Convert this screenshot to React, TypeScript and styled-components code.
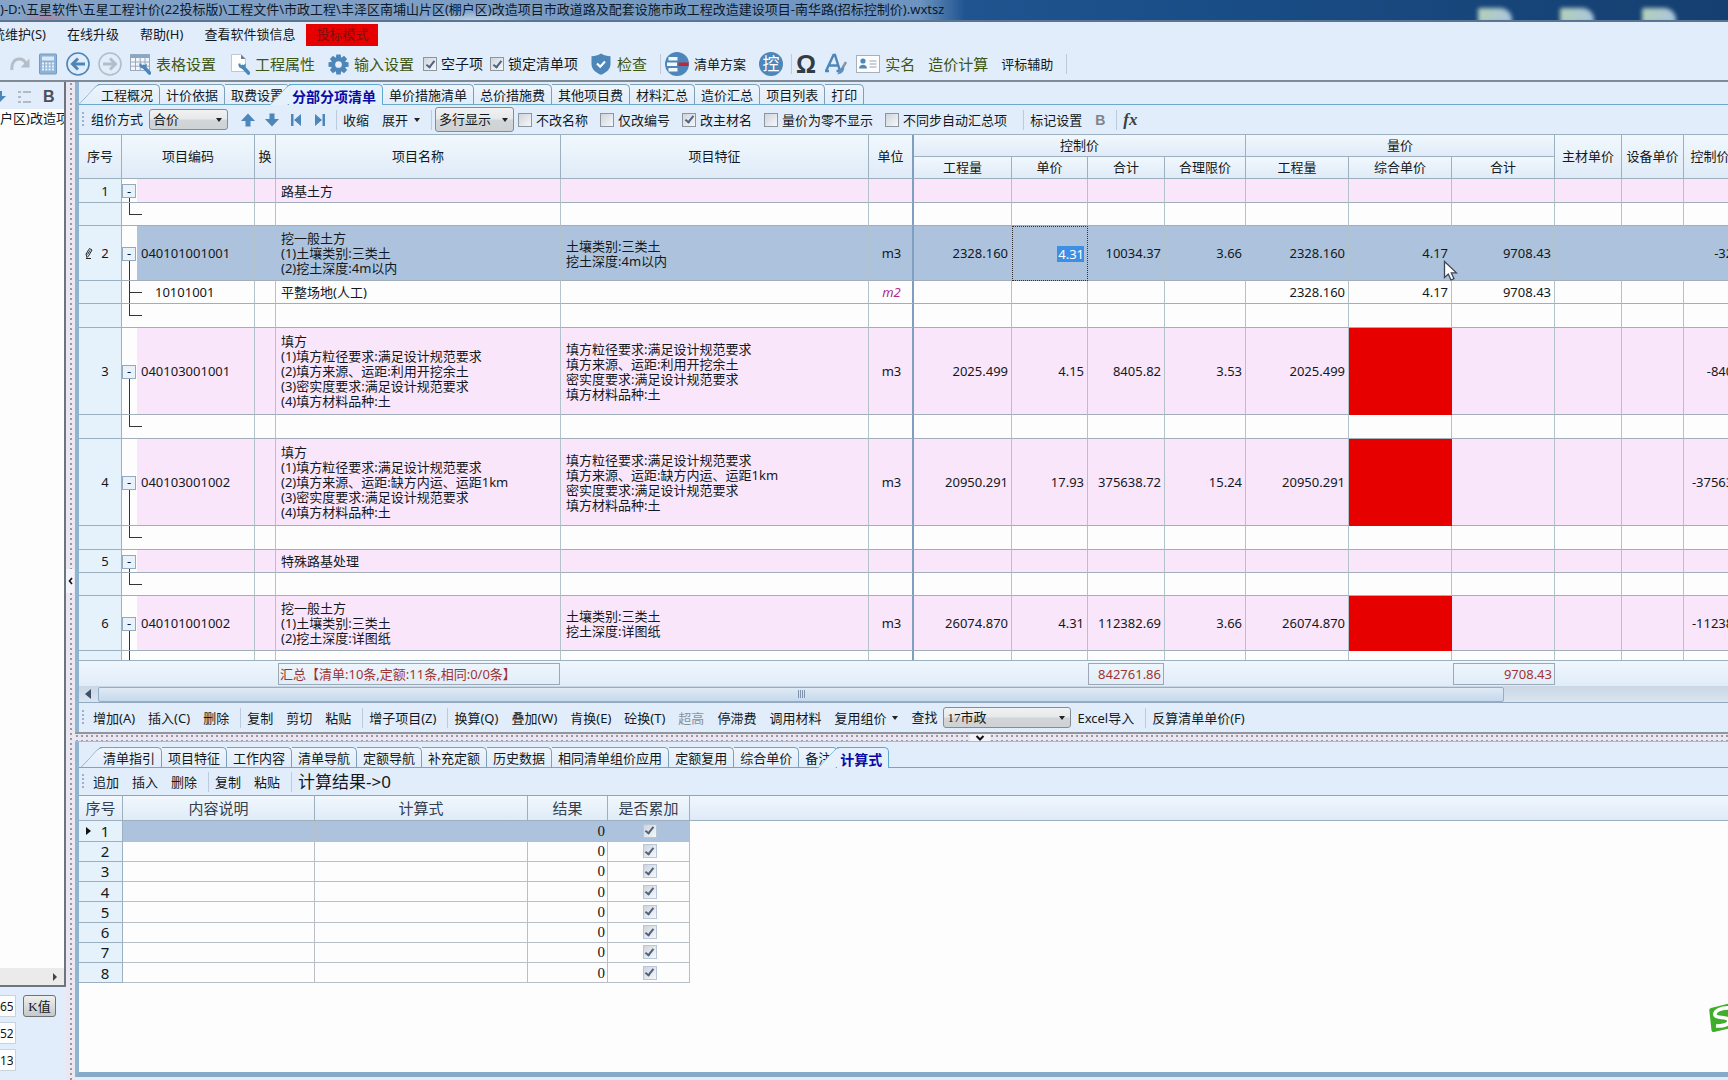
import React from "react";
import styled, { createGlobalStyle, css } from "styled-components";

const line = "#9db0bf";
const paneBg = "#e1edfb";
const blue = "#4d86b8";

const GlobalStyle = createGlobalStyle`
  *, *::before, *::after { box-sizing: border-box; }
  html, body { margin: 0; padding: 0; overflow: hidden; background: ${paneBg}; }
  body, button, input, select {
    font-family: "Noto Sans", "Noto Sans CJK SC", sans-serif;
    font-size: 13px;
    line-height: 15px;
    color: #121820;
  }
  button { border: 0; background: none; padding: 0; margin: 0; }
`;

/* ---------- window frame ---------- */

const Window = styled.div`
  display: flex;
  flex-direction: column;
  height: 100vh;
  overflow: hidden;
  background: ${paneBg};
`;

const TitleBar = styled.header`
  position: relative;
  flex: none;
  height: 22px;
  overflow: hidden;
  border-bottom: 2px solid #5a7594;
  background:
    radial-gradient(ellipse 26px 10px at 46px 20px, rgba(190, 120, 140, 0.7), transparent),
    radial-gradient(ellipse 60px 10px at 475px 20px, rgba(220, 235, 240, 0.7), transparent),
    linear-gradient(90deg, #86a3c7 0, #7c9dc4 500px, #6d94c0 920px, #1f5490 965px, #1a4f89 1150px, #153f70 100%);
`;

const TitleText = styled.h1`
  margin: 0;
  font-size: 13px;
  font-weight: 400;
  line-height: 19px;
  white-space: nowrap;
  color: #0c1a2c;
`;

const GlassIcons = styled.div`
  position: absolute;
  right: 52px;
  bottom: -3px;
  display: flex;
  gap: 48px;
  filter: blur(2px);
`;

const GlassIcon = styled.span`
  width: 34px;
  height: 15px;
  border-radius: 2px 12px 0 0;
  background: linear-gradient(100deg, #b4d0b8, #a9c5de);
`;

const MenuBar = styled.nav`
  flex: none;
  display: flex;
  align-items: center;
  gap: 1px;
  height: 26px;
  margin-left: -31px;
`;

const MenuItem = styled.button<{ $alert?: boolean }>`
  height: 22px;
  padding: 0 10px 2px;
  white-space: nowrap;
  ${(p) => p.$alert && css`background: #e60000; color: #7a1010;`}
`;

const Toolbar = styled.div<{ $h: number; $inset?: number }>`
  flex: none;
  display: flex;
  align-items: center;
  height: ${(p) => p.$h}px;
  padding-left: ${(p) => p.$inset ?? 3}px;
  white-space: nowrap;
  overflow: hidden;
`;

const MainToolbar = styled(Toolbar)`
  border-bottom: 2px solid #808a94;
`;

const ToolButton = styled.button<{ $tone?: "olive"; $size?: number; $icon?: boolean }>`
  flex: none;
  display: flex;
  align-items: center;
  gap: 5px;
  padding: ${(p) => (p.$icon ? "0 4px" : "0 9px 0 4px")};
  font-size: ${(p) => p.$size ?? 13}px;
  line-height: 22px;
  color: ${(p) => (p.$tone === "olive" ? "#3f5610" : "#121820")};
  svg { display: block; }
`;

const TextButton = styled.button<{ $dim?: boolean }>`
  flex: none;
  display: flex;
  align-items: center;
  gap: 6px;
  margin-right: 1px;
  padding: 0 6px;
  line-height: 20px;
  color: ${(p) => (p.$dim ? "#8b919b" : "#121820")};
`;

const Sep = styled.span`
  flex: none;
  width: 1px;
  height: 20px;
  margin-left: 4px;
  background: #bccadb;
`;

const Grip = styled.span<{ $wide?: boolean }>`
  flex: none;
  width: 3px;
  height: 15px;
  margin-right: ${(p) => (p.$wide ? 2 : 0)}px;
  background: radial-gradient(circle at 1px 1px, #9fb0c6 1px, transparent 1px) 0 0 / 3px 4px;
`;

const Caret = styled.span`
  border: 3px solid transparent;
  border-top: 4px solid #222;
  border-bottom: 0;
`;

const Check = styled.label<{ $size?: number; $gap?: number }>`
  flex: none;
  display: flex;
  align-items: center;
  gap: 4px;
  padding-right: ${(p) => p.$gap ?? 12}px;
  font-size: ${(p) => p.$size ?? 13}px;
  line-height: 20px;
`;

const Box = styled.input.attrs({ type: "checkbox" })<{ $plain?: boolean }>`
  appearance: none;
  flex: none;
  display: inline-grid;
  place-content: center;
  width: 14px;
  height: 14px;
  margin: 0;
  border: 1px solid ${(p) => (p.$plain ? "#b9c6d8" : "#8d969f")};
  background: linear-gradient(135deg, #cfd5dc, #f6f8fa);
  vertical-align: middle;
  &:checked::after {
    content: "";
    width: 5px;
    height: 9px;
    margin-bottom: 2px;
    border: solid #4f6280;
    border-width: 0 2px 2px 0;
    transform: rotate(38deg);
  }
`;

const SelectWrap = styled.span<{ $w: number; $h: number }>`
  flex: none;
  display: inline-grid;
  align-items: center;
  width: ${(p) => p.$w}px;
  height: ${(p) => p.$h}px;
  border: 1px solid #868c93;
  border-radius: 3px;
  background: linear-gradient(#f1f2f3, #e6e8ea 48%, #d3d6d9 52%, #cfd2d5);
  > * { grid-area: 1 / 1; }
  > ${Caret} { justify-self: end; margin-right: 5px; pointer-events: none; }
`;

const Select = styled.select<{ $serif?: boolean }>`
  appearance: none;
  width: 100%;
  height: 100%;
  padding: 0 3px;
  border: 0;
  background: none;
  ${(p) => p.$serif && css`font-family: "Liberation Serif", "Noto Sans CJK SC", serif;`}
`;

const FieldLabel = styled.label<{ $tail?: number }>`
  display: flex;
  align-items: center;
  gap: 6px;
  padding: 0 ${(p) => p.$tail ?? 0}px 0 6px;
`;

const BareField = styled.span`
  display: flex;
  padding: 0 4px 0 3px;
`;

const Glyph = styled.span<{ $color: string; $serif?: boolean; $size: number; $italic?: boolean }>`
  font-family: ${(p) => (p.$serif ? '"Liberation Serif", serif' : '"Liberation Sans", sans-serif')};
  font-size: ${(p) => p.$size}px;
  font-weight: 700;
  font-style: ${(p) => (p.$italic ? "italic" : "normal")};
  line-height: 22px;
  color: ${(p) => p.$color};
`;

const Badge = styled.span`
  display: grid;
  place-content: center;
  width: 24px;
  height: 24px;
  border-radius: 50%;
  background: ${blue};
  color: #fff;
  font-size: 17px;
`;

/* ---------- body ---------- */

const Body = styled.div`
  flex: 1;
  min-height: 0;
  display: flex;
`;

const Side = styled.aside`
  flex: none;
  display: flex;
  flex-direction: column;
  width: 66px;
  overflow: hidden;
  white-space: nowrap;
`;

const SideTop = styled.div`
  flex: 1;
  display: flex;
  flex-direction: column;
  border-right: 2px solid #6c7680;
  border-bottom: 2px solid #6c7680;
  background: #fdfdfd;
`;

const SideTools = styled.div`
  display: flex;
  align-items: center;
  gap: 12px;
  height: 27px;
  padding-top: 2px;
  background: ${paneBg};
`;

const TreeNode = styled.div`
  flex: 1;
  padding-top: 1px;
  overflow: hidden;
  line-height: 17px;
`;

const SideScroll = styled.div`
  display: flex;
  align-items: center;
  justify-content: flex-end;
  height: 17px;
  padding-right: 7px;
  background: #ecebec;
`;

const SideBottom = styled.div`
  display: flex;
  flex-direction: column;
  gap: 5px;
  padding: 8px 0 9px;
`;

const SideRow = styled.div`
  display: flex;
  align-items: center;
  gap: 7px;
  height: 22px;
`;

const SideInput = styled.input`
  width: 16px;
  height: 22px;
  padding: 0 2px 0 0;
  border: 1px solid #c9d3de;
  border-left: 0;
  background: #fdfdfd;
  font-size: 12px;
  text-align: right;
`;

const KButton = styled.button`
  width: 33px;
  height: 22px;
  border: 1px solid #6d7276;
  border-radius: 3px;
  background: linear-gradient(#f0f0f0, #dcdcdc 48%, #c8c8c8);
  font-family: "Liberation Serif", "Noto Sans CJK SC", serif;
`;

const dotsBg = css`
  background-color: #ebe7f0;
  background-image: radial-gradient(circle at 2px 2px, #9a97aa 1px, transparent 1px);
  background-size: 5px 5px;
`;

const VSplit = styled.div`
  flex: none;
  display: flex;
  align-items: center;
  width: 9px;
  ${dotsBg}
  background-repeat: repeat-y;
  background-position: 3px 0;
`;

const VHandle = styled.button`
  display: grid;
  place-content: center;
  width: 8px;
  height: 24px;
  background: #f3f4fa;
`;

const Main = styled.main`
  flex: 1;
  min-width: 0;
  display: flex;
  flex-direction: column;
  padding-bottom: 3px;
`;

const Panel = styled.section<{ $grow: number; $end?: boolean }>`
  flex: ${(p) => p.$grow} 1 0;
  min-height: 0;
  display: flex;
  flex-direction: column;
  border-left: 4px solid #8fb4d2;
  ${(p) => p.$end && css`border-bottom: 5px solid #86abc8;`}
`;

/* ---------- tabs ---------- */

const TabRow = styled.div<{ $top: number; $inset?: number }>`
  flex: none;
  display: flex;
  align-items: flex-end;
  height: ${(p) => 20 + p.$top}px;
  padding-left: ${(p) => p.$inset ?? 0}px;
  border-bottom: 1px solid #6fa9c8;
  white-space: nowrap;
`;

const Tab = styled.button<{ $slant?: boolean; $on?: boolean; $tucked?: boolean }>`
  position: relative;
  flex: none;
  height: 20px;
  padding: 2px 6px 0;
  border: 1px solid #7d9fb8;
  border-left: 0;
  border-bottom: 0;
  border-radius: 0 5px 0 0;
  line-height: 17px;
  background: linear-gradient(#eef5fc, ${paneBg});
  ${(p) => p.$slant && css`
    margin-left: 19px;
    padding-left: 3px;
    z-index: 0;
    &::before {
      content: "";
      position: absolute;
      top: -1px;
      left: -10px;
      width: 18px;
      height: 20px;
      border: 1px solid #7d9fb8;
      border-width: 1px 0 0 1px;
      border-radius: 4px 0 0 0;
      background: inherit;
      transform: skewX(-43deg);
      z-index: -1;
    }
  `}
  ${(p) => p.$on && css`
    margin-left: 9px;
    margin-bottom: -1px;
    z-index: 1;
    height: 21px;
    font-weight: 700;
    font-size: 14px;
    color: #0a0aa8;
    background: #e4f1fd;
    border-color: #5fa8d0;
    &::before { height: 21px; border-color: #5fa8d0; }
  `}
  ${(p) => p.$tucked && css`margin-right: -10px;`}
`;

/* ---------- main grid ---------- */

const GridScroll = styled.div`
  flex: 1;
  min-height: 0;
  overflow: hidden;
  border-top: 1px solid ${line};
  background: #fdfdfd;
`;

const Grid = styled.table`
  table-layout: fixed;
  width: 1684px;
  border-collapse: separate;
  border-spacing: 0;
`;

const Th = styled.th<{ $thick?: boolean }>`
  height: 22px;
  padding: 0;
  border-right: ${(p) => (p.$thick ? "2px solid #7f9fc0" : `1px solid ${line}`)};
  border-bottom: 1px solid ${line};
  background: linear-gradient(#f1f8fd, #e0ebf8);
  font-weight: 400;
  text-align: center;
  white-space: nowrap;
`;

type Tone = "pink" | "pick" | "plain";
const tones: Record<Tone, string> = { pink: "#fae6fb", pick: "#adc3dd", plain: "#fdfdfd" };

const Tr = styled.tr<{ $h: number; $tone: Tone }>`
  height: ${(p) => p.$h}px;
  background: ${(p) => tones[p.$tone]};
`;

const Td = styled.td<{ $num?: boolean; $mid?: boolean; $thick?: boolean; $red?: boolean; $focus?: boolean }>`
  padding: 1px 3px 0 5px;
  border-right: ${(p) => (p.$thick ? "2px solid #7f9fc0" : "1px solid #b3c3cc")};
  border-bottom: 1px solid #a3aebb;
  white-space: pre-line;
  text-align: ${(p) => (p.$num ? "right" : p.$mid ? "center" : "left")};
  ${(p) => p.$red && css`background: #e60000; border-color: #e60000;`}
  ${(p) => p.$focus && css`outline: 1px dotted #333; outline-offset: -1px;`}
`;

const RowHead = styled.td`
  padding: 1px 0 0;
  border-right: 1px solid ${line};
  border-bottom: 1px solid ${line};
  background: #e6f2fb;
`;

const HeadInner = styled.span`
  display: grid;
  grid-template-columns: 18px 16px 1fr;
  align-items: center;
  justify-items: center;
`;

type Branch = "open" | "mid" | "end" | "none";
const ink = "linear-gradient(#333, #333)";
const branchBg: Record<Branch, string> = {
  open: `${ink} 7px 100% / 1px 50% no-repeat`,
  mid: `${ink} 7px 0 / 1px 100% no-repeat, ${ink} 7px 50% / 8px 1px no-repeat`,
  end: `${ink} 7px 0 / 1px 50% no-repeat, ${ink} 7px 50% / 8px 1px no-repeat`,
  none: `${ink} 7px 0 / 1px 100% no-repeat`,
};

const Gutter = styled.td<{ $branch: Branch }>`
  padding: 1px 0 0;
  border-bottom: 1px solid #a3aebb;
  background: ${(p) => branchBg[p.$branch]}, #fdfdfd;
`;

const CodeTd = styled(Td)<{ $tick?: boolean; $child?: boolean }>`
  padding-left: ${(p) => (p.$child ? 18 : 4)}px;
  ${(p) => p.$tick && css`background: ${ink} 0 50% / 5px 1px no-repeat;`}
`;

const Fold = styled.button`
  display: block;
  width: 14px;
  height: 14px;
  border: 1px solid #93a9bd;
  background: #e9f2fa;
  line-height: 11px;
`;

const Unit = styled.span`
  font-style: italic;
  color: #b3288f;
`;

const CellInput = styled.input`
  width: 27px;
  height: 16px;
  padding: 0;
  border: 0;
  background: #3d8fe6;
  color: #fff;
  text-align: right;
`;

const Summary = styled.div`
  flex: none;
  display: grid;
  grid-template-columns: 199px 282px 528px 76px 289px 102px;
  align-items: center;
  height: 26px;
  border-top: 1px solid ${line};
  background: linear-gradient(#eff7fd, #e0ecf8);
`;

const Total = styled.output<{ $col: number; $num?: boolean }>`
  grid-column: ${(p) => p.$col};
  height: 22px;
  padding: 0 2px 0 1px;
  border: 1px solid #9aa9b5;
  line-height: 20px;
  white-space: nowrap;
  color: #a03434;
  text-align: ${(p) => (p.$num ? "right" : "left")};
`;

const HScroll = styled.div`
  flex: none;
  display: flex;
  align-items: center;
  height: 17px;
  padding-left: 6px;
  gap: 6px;
  border-bottom: 1px solid #93a9c0;
  background: linear-gradient(#c9d6e5, #dbe5f0);
`;

const Thumb = styled.div`
  display: grid;
  place-content: center;
  width: 85.6%;
  height: 15px;
  border: 1px solid #94adc8;
  border-radius: 2px;
  background: linear-gradient(#dfeaf5, #c6d9ec);
`;

const ThumbGrip = styled.span`
  width: 7px;
  height: 8px;
  background: repeating-linear-gradient(90deg, #7f95ad 0 1px, transparent 1px 2px);
`;

const HSplit = styled.div`
  flex: none;
  display: flex;
  justify-content: center;
  height: 10px;
  padding-left: 156px;
  border-top: 2px solid #8f96a0;
  border-bottom: 1px solid #b8b8c4;
  ${dotsBg}
`;

const HHandle = styled.button`
  display: grid;
  place-content: center;
  width: 20px;
  height: 7px;
  background: #f3f4fa;
`;

/* ---------- formula grid ---------- */

const ResultText = styled.span`
  padding-left: 6px;
  font-size: 17px;
  line-height: 22px;
`;

const FormulaArea = styled.div`
  flex: 1;
  min-height: 0;
  overflow: hidden;
  border-top: 1px solid #8fa5b8;
  background: linear-gradient(#eff7fd, #e0ebf8 24px, ${line} 24px, ${line} 25px, #fdfdfd 25px);
`;

const FormulaTable = styled.table`
  table-layout: fixed;
  width: 611px;
  height: 187px;
  border-collapse: separate;
  border-spacing: 0;
  font-size: 15px;
  line-height: 17px;
`;

const FTh = styled(Th)`
  height: 25px;
  font-size: 15px;
  color: #34404f;
`;

const FTr = styled.tr<{ $on?: boolean }>`
  background: ${(p) => (p.$on ? tones.pick : "#fdfdfd")};
`;

const FTd = styled.td<{ $num?: boolean }>`
  padding: 0 2px 0 4px;
  border-right: 1px solid #b9bfc6;
  border-bottom: 1px solid #b9bfc6;
  text-align: ${(p) => (p.$num ? "right" : "center")};
  font-family: ${(p) => (p.$num ? '"Liberation Serif", serif' : "inherit")};
  line-height: 0;
`;

const Pointer = styled.svg`
  position: fixed;
  left: 1443px;
  top: 260px;
`;

const Sogou = styled.svg`
  position: fixed;
  right: 0;
  bottom: 45px;
`;

/* ---------- icons ---------- */

const RedoIcon = () => (
  <svg width="20" height="20" viewBox="0 0 20 20" fill="none" stroke="#b4bdc8" strokeWidth="3">
    <path d="M2 16C1 9 5 4.500 10 5c3 .3 5 2 6 5" />
    <path d="M19.500 4.500v9h-9z" fill="#b4bdc8" stroke="none" />
  </svg>
);
const CalcIcon = () => (
  <svg width="20" height="22" viewBox="0 0 20 22">
    <rect x="1.500" y="1" width="17" height="20" rx="1" fill="#8fb3d6" stroke="#6f9bc6" />
    <rect x="4" y="3.500" width="12" height="4" fill="#dce9f6" />
    {[9.5, 12.5, 15.5].map((y) =>
      [4, 7.3, 10.6, 13.9].map((x) => <rect key={`${x}-${y}`} x={x} y={y} width="2" height="2" fill="#eef5fc" />)
    )}
  </svg>
);
const CircleArrow = ({ color, flip }: { color: string; flip?: boolean }) => (
  <svg width="24" height="24" viewBox="0 0 24 24" fill="none" stroke={color}>
    <circle cx="12" cy="12" r="11" strokeWidth="1.600" />
    <g transform={flip ? "translate(24 0) scale(-1 1)" : undefined} strokeWidth="3">
      <path d="M19 12H7" />
      <path d="M12 6.500 6.500 12l5.500 5.500" />
    </g>
  </svg>
);
const Wrench = () => (
  <g>
    <path d="m13.500 13.500 6 6.500" stroke={blue} strokeWidth="3.600" strokeLinecap="round" />
    <path d="M9.500 10.500c-.6 2.800 1.400 5.300 4 5 2.600-.3 3.800-2.700 3-5l-2.400 2.300-2.300-.6-.3-1.700z" fill={blue} />
  </g>
);
const TableIcon = () => (
  <svg width="21" height="22" viewBox="0 0 21 22" fill="none">
    <rect x=".5" y="1.500" width="19" height="16" fill="#f2f6fa" stroke="#9aa9bd" />
    <rect x=".5" y="1.500" width="19" height="3.500" fill="#8ba7c6" />
    <path d="M.5 9h19M.5 13.200h19M5.500 5v12.500M10.200 5v12.500M15 5v12.500" stroke="#9aa9bd" />
    <Wrench />
  </svg>
);
const DocIcon = () => (
  <svg width="21" height="22" viewBox="0 0 21 22" fill="none">
    <path d="M2.500 1.500h9.500l4.500 4.500v12.500h-14z" fill="#fff" stroke="#bcc8d6" />
    <path d="M12 1.500v4.500h4.500z" fill="#6f7c8c" />
    <Wrench />
  </svg>
);
const GearIcon = () => (
  <svg width="21" height="21" viewBox="0 0 22 22">
    <g fill={blue}>
      {[0, 45, 90, 135, 180, 225, 270, 315].map((a) => (
        <path key={a} d="M8.700 0.500h4.600l.6 5h-5.800z" transform={`rotate(${a} 11 11)`} />
      ))}
      <circle cx="11" cy="11" r="7.800" />
    </g>
    <circle cx="11" cy="11" r="3.500" fill="#e8f1fb" />
  </svg>
);
const ShieldIcon = () => (
  <svg width="22" height="22" viewBox="0 0 22 22">
    <path d="M11 0.500c3 2 6 2.700 9.500 2.700V11c0 5-4 8.500-9.500 10.800C5.500 19.500 1.500 16 1.500 11V3.200C5 3.200 8 2.500 11 .5z" fill={blue} />
    <path d="m7 10.500 3.200 3.200L15 8.500" fill="none" stroke="#fff" strokeWidth="2.200" />
  </svg>
);
const PlanIcon = () => (
  <svg width="24" height="24" viewBox="0 0 24 24">
    <circle cx="12" cy="12" r="12" fill={blue} />
    <path d="M3.500 5h9v3.500h-9zM2 10.500h10v3.500H2zM3.500 16h9v3.500h-9z" fill="#f4f8fc" />
    <rect x="13.500" y="10.500" width="10" height="3.500" fill="#c3243a" />
  </svg>
);
const FontIcon = () => (
  <svg width="24" height="24" viewBox="0 0 24 24" fill="none">
    <path d="M2 19 9.500 3h1.500l5 16M5 13.500h9M1 19h4M12.500 19h4" stroke={blue} strokeWidth="2.400" />
    <path d="m22 10-3.500 6" stroke="#8b97a6" strokeWidth="2.500" />
    <path d="M19.500 14.500c2 2.500-.5 7.500-6.500 8 2.500-2 1.500-6.500 6.500-8z" fill="#5f8fbd" />
  </svg>
);
const CardIcon = () => (
  <svg width="24" height="18" viewBox="0 0 24 18">
    <rect x=".5" y=".5" width="23" height="17" fill="#fbfcfe" stroke="#a8b0bb" />
    <circle cx="7" cy="6" r="2.600" fill={blue} />
    <path d="M3 13.500c0-5 8-5 8 0z" fill={blue} />
    <path d="M13.500 6h7M13.500 9h7M13.500 12h7" stroke="#9aa3ae" />
  </svg>
);
const NavArrow = ({ kind }: { kind: "up" | "down" | "first" | "last" }) => {
  const d = {
    up: "M8 1.500 15 9h-4.500v5.500h-5V9H1z",
    down: "M8 14.500 1 7h4.500V1.500h5V7H15z",
    first: "M3 2h2.500v12H3zM13 2v12L6 8z",
    last: "M10.500 2H13v12h-2.500zM3 2v12l7-6z",
  }[kind];
  return (
    <svg width="16" height="16" viewBox="0 0 16 16">
      <path d={d} fill={blue} />
    </svg>
  );
};
const EditMark = () => (
  <svg width="9" height="13" viewBox="0 0 9 13" fill="none" stroke="#222">
    <path d="M3 10.500 2 7l3.500-5.500L8 3 4.500 9zM3.500 7.500 6 3.500M2 11.500h5" />
  </svg>
);

/* ---------- data ---------- */

type Row = {
  h: number;
  tone: Tone;
  branch: Branch;
  no?: string;
  code?: string;
  name?: string;
  feature?: string;
  unit?: string;
  nums?: string[];
  editing?: boolean;
  flagged?: boolean;
};

const gap = (h = 23): Row => ({ h, tone: "plain", branch: "end" });

const rows: Row[] = [
  { h: 24, tone: "pink", branch: "open", no: "1", name: "路基土方" },
  gap(),
  {
    h: 55, tone: "pick", branch: "open", no: "2", code: "040101001001", editing: true, unit: "m3",
    name: "挖一般土方\n(1)土壤类别:三类土\n(2)挖土深度:4m以内",
    feature: "土壤类别:三类土\n挖土深度:4m以内",
    nums: ["2328.160", "4.31", "10034.37", "3.66", "2328.160", "4.17", "9708.43", "", "", "-325.94"],
  },
  {
    h: 23, tone: "plain", branch: "mid", code: "10101001", name: "平整场地(人工)", unit: "m2",
    nums: ["", "", "", "", "2328.160", "4.17", "9708.43", "", "", ""],
  },
  gap(24),
  {
    h: 87, tone: "pink", branch: "open", no: "3", code: "040103001001", flagged: true, unit: "m3",
    name: "填方\n(1)填方粒径要求:满足设计规范要求\n(2)填方来源、运距:利用开挖余土\n(3)密实度要求:满足设计规范要求\n(4)填方材料品种:土",
    feature: "填方粒径要求:满足设计规范要求\n填方来源、运距:利用开挖余土\n密实度要求:满足设计规范要求\n填方材料品种:土",
    nums: ["2025.499", "4.15", "8405.82", "3.53", "2025.499", "", "", "", "", "-8405.82"],
  },
  gap(24),
  {
    h: 87, tone: "pink", branch: "open", no: "4", code: "040103001002", flagged: true, unit: "m3",
    name: "填方\n(1)填方粒径要求:满足设计规范要求\n(2)填方来源、运距:缺方内运、运距1km\n(3)密实度要求:满足设计规范要求\n(4)填方材料品种:土",
    feature: "填方粒径要求:满足设计规范要求\n填方来源、运距:缺方内运、运距1km\n密实度要求:满足设计规范要求\n填方材料品种:土",
    nums: ["20950.291", "17.93", "375638.72", "15.24", "20950.291", "", "", "", "", "-375638.72"],
  },
  gap(24),
  { h: 23, tone: "pink", branch: "open", no: "5", name: "特殊路基处理" },
  gap(),
  {
    h: 55, tone: "pink", branch: "open", no: "6", code: "040101001002", flagged: true, unit: "m3",
    name: "挖一般土方\n(1)土壤类别:三类土\n(2)挖土深度:详图纸",
    feature: "土壤类别:三类土\n挖土深度:详图纸",
    nums: ["26074.870", "4.31", "112382.69", "3.66", "26074.870", "", "", "", "", "-112382.69"],
  },
  { h: 23, tone: "plain", branch: "none" },
];

const columns = [43, 15, 118, 21, 285, 308, 45, 98, 76, 77, 81, 103, 103, 103, 67, 62, 79];

const GridRow = ({ row }: { row: Row }) => {
  const nums: string[] = row.nums ?? Array(10).fill("");
  const child = row.branch === "mid";
  return (
    <Tr $h={row.h} $tone={row.tone}>
      <RowHead>
        <HeadInner>
          {row.editing ? <EditMark /> : <span />}
          <span>{row.no}</span>
        </HeadInner>
      </RowHead>
      <Gutter $branch={row.branch}>
        {row.branch === "open" && <Fold aria-label="收缩子项">-</Fold>}
      </Gutter>
      <CodeTd $child={child} $tick={child || row.branch === "end"}>{row.code}</CodeTd>
      <Td />
      <Td>{row.name}</Td>
      <Td>{row.feature}</Td>
      <Td $mid $thick>{child ? <Unit>{row.unit}</Unit> : row.unit}</Td>
      {nums.map((n, i) => {
        const editing = row.editing && i === 1;
        return (
          <Td key={i} $num $focus={editing} $red={row.flagged && i === 5}>
            {editing ? <CellInput aria-label="单价" defaultValue={n} /> : n}
          </Td>
        );
      })}
    </Tr>
  );
};

export default function App() {
  return (
    <Window>
      <GlobalStyle />
      <TitleBar>
        <TitleText>
          )-D:\五星软件\五星工程计价(22投标版)\工程文件\市政工程\丰泽区南埔山片区(棚户区)改造项目市政道路及配套设施市政工程改造建设项目-南华路(招标控制价).wxtsz
        </TitleText>
        <GlassIcons aria-hidden="true">
          <GlassIcon /><GlassIcon /><GlassIcon />
        </GlassIcons>
      </TitleBar>

      <MenuBar>
        <MenuItem>系统维护(S)</MenuItem>
        <MenuItem>在线升级</MenuItem>
        <MenuItem>帮助(H)</MenuItem>
        <MenuItem>查看软件锁信息</MenuItem>
        <MenuItem $alert>投标模式</MenuItem>
      </MenuBar>

      <MainToolbar $h={34} $inset={6}>
        <ToolButton $icon aria-label="重做"><RedoIcon /></ToolButton>
        <ToolButton $icon aria-label="计算器"><CalcIcon /></ToolButton>
        <ToolButton $icon aria-label="后退"><CircleArrow color={blue} /></ToolButton>
        <ToolButton $icon aria-label="前进"><CircleArrow color="#b4bdc8" flip /></ToolButton>
        <ToolButton $tone="olive" $size={15}><TableIcon />表格设置</ToolButton>
        <ToolButton $tone="olive" $size={15}><DocIcon />工程属性</ToolButton>
        <ToolButton $tone="olive" $size={15}><GearIcon />输入设置</ToolButton>
        <Check $size={14} $gap={7}><Box defaultChecked />空子项</Check>
        <Check $size={14} $gap={8}><Box defaultChecked />锁定清单项</Check>
        <ToolButton $tone="olive" $size={15}><ShieldIcon />检查</ToolButton>
        <Sep />
        <ToolButton><PlanIcon />清单方案</ToolButton>
        <ToolButton $icon><Badge>控</Badge></ToolButton>
        <Sep />
        <ToolButton $icon><Glyph $color="#333b45" $size={25}>Ω</Glyph></ToolButton>
        <ToolButton $icon aria-label="字体"><FontIcon /></ToolButton>
        <ToolButton $tone="olive" $size={15}><CardIcon />实名</ToolButton>
        <ToolButton $tone="olive" $size={15}>造价计算</ToolButton>
        <ToolButton>评标辅助</ToolButton>
        <Sep />
      </MainToolbar>

      <Body>
        <Side>
          <SideTop>
            <SideTools>
              <svg width="6" height="14" viewBox="0 0 6 14"><path d="M-6 6H6L0 12z" fill={blue} /><path d="M0 1h2v6H0z" fill={blue} /></svg>
              <svg width="13" height="14" viewBox="0 0 13 14" stroke="#b3bac4" strokeWidth="2"><path d="M0 2h3M5 2h8M0 7h3M5 12h8M0 12h3" /></svg>
              <Glyph $color="#4a5058" $size={16}>B</Glyph>
            </SideTools>
            <TreeNode>户区)改造项目</TreeNode>
            <SideScroll>
              <svg width="4" height="8" viewBox="0 0 4 8"><path d="M0 0l4 4-4 4z" fill="#444" /></svg>
            </SideScroll>
          </SideTop>
          <SideBottom>
            <SideRow><SideInput aria-label="数值一" defaultValue="65" /><KButton>K值</KButton></SideRow>
            <SideRow><SideInput aria-label="数值二" defaultValue="52" /></SideRow>
            <SideRow><SideInput aria-label="数值三" defaultValue="13" /></SideRow>
          </SideBottom>
        </Side>
        <VSplit>
          <VHandle aria-label="收起左侧">
            <svg width="5" height="8" viewBox="0 0 5 8"><path d="M4 1 1.500 4 4 7" fill="none" stroke="#111" strokeWidth="1.600" /></svg>
          </VHandle>
        </VSplit>

        <Main>
          <Panel $grow={653}>
            <TabRow $top={3} role="tablist">
              <Tab $slant>工程概况</Tab>
              <Tab>计价依据</Tab>
              <Tab $tucked>取费设置</Tab>
              <Tab $slant $on>分部分项清单</Tab>
              <Tab>单价措施清单</Tab>
              <Tab>总价措施费</Tab>
              <Tab>其他项目费</Tab>
              <Tab>材料汇总</Tab>
              <Tab>造价汇总</Tab>
              <Tab>项目列表</Tab>
              <Tab>打印</Tab>
            </TabRow>
            <Toolbar $h={29}>
              <Grip />
              <FieldLabel $tail={8}>
                组价方式
                <SelectWrap $w={79} $h={21}>
                  <Select defaultValue="合价"><option>合价</option></Select>
                  <Caret />
                </SelectWrap>
              </FieldLabel>
              <ToolButton $icon aria-label="上移"><NavArrow kind="up" /></ToolButton>
              <ToolButton $icon aria-label="下移"><NavArrow kind="down" /></ToolButton>
              <ToolButton $icon aria-label="首行"><NavArrow kind="first" /></ToolButton>
              <ToolButton $icon aria-label="末行"><NavArrow kind="last" /></ToolButton>
              <Sep />
              <TextButton>收缩</TextButton>
              <TextButton>展开<Caret /></TextButton>
              <Sep />
              <BareField>
                <SelectWrap $w={79} $h={25}>
                  <Select aria-label="显示方式" defaultValue="多行显示"><option>多行显示</option></Select>
                  <Caret />
                </SelectWrap>
              </BareField>
              <Check><Box />不改名称</Check>
              <Check><Box />仅改编号</Check>
              <Check><Box defaultChecked />改主材名</Check>
              <Check><Box />量价为零不显示</Check>
              <Check><Box />不同步自动汇总项</Check>
              <Sep />
              <TextButton>标记设置</TextButton>
              <TextButton><Glyph $color="#7d838c" $size={14}>B</Glyph></TextButton>
              <Sep />
              <TextButton><Glyph $color="#3a4048" $size={17} $serif $italic>fx</Glyph></TextButton>
            </Toolbar>
            <GridScroll>
              <Grid>
                <colgroup>{columns.map((w, i) => <col key={i} width={w} />)}</colgroup>
                <thead>
                  <tr>
                    <Th rowSpan={2}>序号</Th>
                    <Th rowSpan={2} colSpan={2}>项目编码</Th>
                    <Th rowSpan={2}>换</Th>
                    <Th rowSpan={2}>项目名称</Th>
                    <Th rowSpan={2}>项目特征</Th>
                    <Th rowSpan={2} $thick>单位</Th>
                    <Th colSpan={4}>控制价</Th>
                    <Th colSpan={3}>量价</Th>
                    <Th rowSpan={2}>主材单价</Th>
                    <Th rowSpan={2}>设备单价</Th>
                    <Th rowSpan={2}>控制价差额</Th>
                  </tr>
                  <tr>
                    {["工程量", "单价", "合计", "合理限价", "工程量", "综合单价", "合计"].map((t, i) => <Th key={i}>{t}</Th>)}
                  </tr>
                </thead>
                <tbody>{rows.map((r, i) => <GridRow key={i} row={r} />)}</tbody>
              </Grid>
            </GridScroll>
            <Summary>
              <Total $col={2}>汇总【清单:10条,定额:11条,相同:0/0条】</Total>
              <Total $col={4} $num>842761.86</Total>
              <Total $col={6} $num>9708.43</Total>
            </Summary>
            <HScroll>
              <svg width="7" height="10" viewBox="0 0 7 10"><path d="M6 0v10L0 5z" fill="#3d5068" /></svg>
              <Thumb><ThumbGrip /></Thumb>
            </HScroll>
            <Toolbar $h={29}>
              <Grip $wide />
              <TextButton>增加(A)</TextButton>
              <TextButton>插入(C)</TextButton>
              <TextButton>删除</TextButton>
              <Sep />
              <TextButton>复制</TextButton>
              <TextButton>剪切</TextButton>
              <TextButton>粘贴</TextButton>
              <Sep />
              <TextButton>增子项目(Z)</TextButton>
              <Sep />
              <TextButton>换算(Q)</TextButton>
              <TextButton>叠加(W)</TextButton>
              <TextButton>肯换(E)</TextButton>
              <TextButton>砼换(T)</TextButton>
              <TextButton $dim>超高</TextButton>
              <TextButton>停滞费</TextButton>
              <TextButton>调用材料</TextButton>
              <TextButton>复用组价<Caret /></TextButton>
              <FieldLabel>
                查找
                <SelectWrap $w={128} $h={21}>
                  <Select $serif defaultValue="17市政"><option>17市政</option></Select>
                  <Caret />
                </SelectWrap>
              </FieldLabel>
              <TextButton>Excel导入</TextButton>
              <Sep />
              <TextButton>反算清单单价(F)</TextButton>
            </Toolbar>
          </Panel>

          <HSplit>
            <HHandle aria-label="收起下方">
              <svg width="10" height="6" viewBox="0 0 10 6"><path d="M1.500 1 5 4.500 8.500 1" fill="none" stroke="#111" strokeWidth="2" /></svg>
            </HHandle>
          </HSplit>

          <Panel $grow={331} $end>
            <TabRow $top={6} $inset={2} role="tablist">
              <Tab $slant>清单指引</Tab>
              <Tab>项目特征</Tab>
              <Tab>工作内容</Tab>
              <Tab>清单导航</Tab>
              <Tab>定额导航</Tab>
              <Tab>补充定额</Tab>
              <Tab>历史数据</Tab>
              <Tab>相同清单组价应用</Tab>
              <Tab>定额复用</Tab>
              <Tab>综合单价</Tab>
              <Tab $tucked>备注</Tab>
              <Tab $slant $on>计算式</Tab>
            </TabRow>
            <Toolbar $h={27}>
              <Grip $wide />
              <TextButton>追加</TextButton>
              <TextButton>插入</TextButton>
              <TextButton>删除</TextButton>
              <Sep />
              <TextButton>复制</TextButton>
              <TextButton>粘贴</TextButton>
              <Sep />
              <ResultText>计算结果-&gt;0</ResultText>
            </Toolbar>
            <FormulaArea>
              <FormulaTable>
                <colgroup>
                  <col width={44} /><col width={192} /><col width={213} /><col width={80} /><col width={82} />
                </colgroup>
                <thead>
                  <tr>
                    <FTh>序号</FTh><FTh>内容说明</FTh><FTh>计算式</FTh><FTh>结果</FTh><FTh>是否累加</FTh>
                  </tr>
                </thead>
                <tbody>
                  {[1, 2, 3, 4, 5, 6, 7, 8].map((n) => (
                    <FTr key={n} $on={n === 1}>
                      <RowHead>
                        <HeadInner>
                          {n === 1 ? <svg width="5" height="8" viewBox="0 0 5 8"><path d="M0 0l5 4-5 4z" fill="#111" /></svg> : <span />}
                          <span>{n}</span>
                        </HeadInner>
                      </RowHead>
                      <FTd /><FTd />
                      <FTd $num>0</FTd>
                      <FTd><Box $plain defaultChecked aria-label={`第${n}行是否累加`} /></FTd>
                    </FTr>
                  ))}
                </tbody>
              </FormulaTable>
            </FormulaArea>
          </Panel>
        </Main>
      </Body>

      <Pointer width="15" height="22" viewBox="0 0 15 22">
        <path d="M1.500 1.500v16l3.800-3.500 2.700 6 3-1.300-2.700-5.800H13.500z" fill="#fff" stroke="#3c4654" strokeWidth="1.300" />
      </Pointer>
      <Sogou width="19" height="32" viewBox="0 0 19 32">
        <path d="M2 5 26-1l4 24-25 6q-2 .3-2.500-1.500L.3 7.500Q0 5.500 2 5z" fill="#3fae2a" />
        <path d="M22 5C12 4 5 8 6 12c1 4 14 1 14 6 0 4-8 5-13 5" fill="none" stroke="#fff" strokeWidth="3.600" />
      </Sogou>
    </Window>
  );
}
